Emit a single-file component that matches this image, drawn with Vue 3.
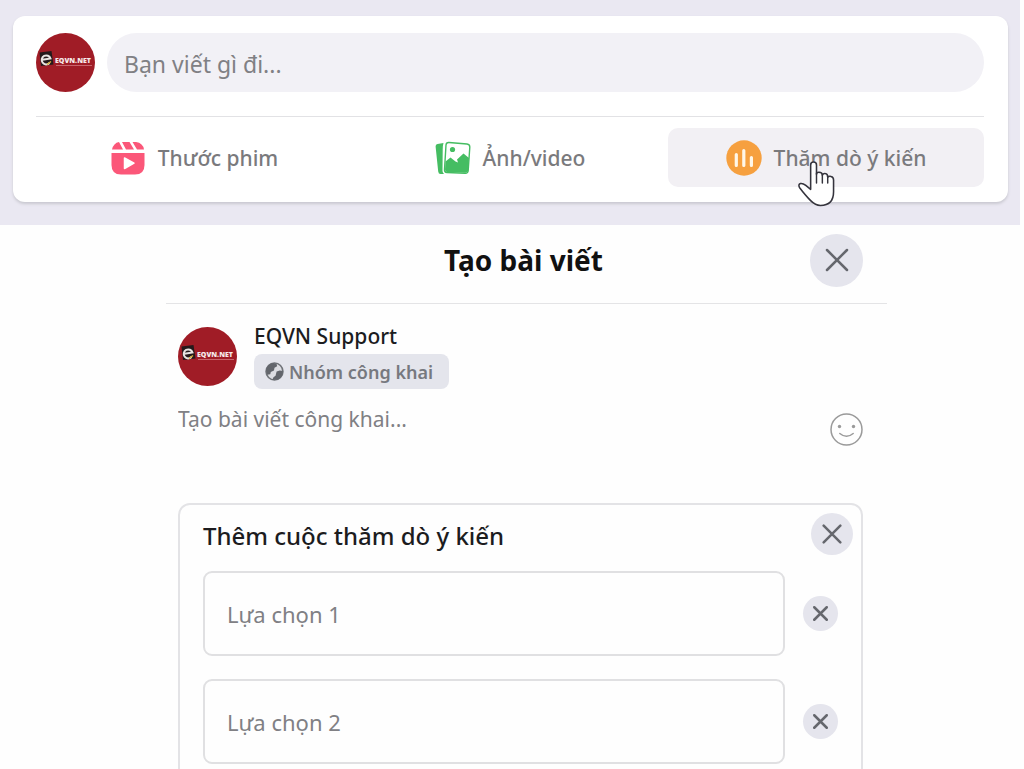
<script setup>
import { ref } from 'vue'

const draft = ref('')
const post = ref('')
const options = ref([
  { id: 1, text: '' },
  { id: 2, text: '' },
])

function removeOption(id) {
  options.value = options.value.filter((o) => o.id !== id)
}
</script>

<template>
  <div class="page">
    <svg class="defs" aria-hidden="true">
      <symbol id="cross" viewBox="0 0 24 24">
        <path d="M2 2 L22 22 M22 2 L2 22" fill="none" stroke="#65676d" stroke-width="2.500" stroke-linecap="round" vector-effect="non-scaling-stroke" />
      </symbol>
    </svg>

    <section class="band">
      <div class="composer">
        <div class="prompt">
          <svg class="avatar" viewBox="0 0 59 59" role="img" aria-label="EQVN">
            <circle cx="29.5" cy="29.5" r="29.5" fill="#a01c26" />
            <path d="M3.500 19.500 L15.500 18 L17.500 31.500 L5 33 Z" fill="#24191b" />
            <path d="M6.500 26.700 L14.500 25.500 A4.500 4.500 0 1 0 13.500 30" fill="none" stroke="#e8e4e2" stroke-width="2" />
            <path d="M11 31.500 L15 28.500" stroke="#d8b23c" stroke-width="1.500" />
            <text x="19" y="30" class="brand-text">EQVN.NET</text>
            <path d="M20 32.500 H56" stroke="#c8646c" stroke-width="1" />
          </svg>
          <input v-model="draft" class="prompt-input" type="text" aria-label="Bạn viết gì đi" placeholder="Bạn viết gì đi..." />
        </div>
        <div class="actions">
          <button type="button" class="action">
            <svg class="action-icon" viewBox="0 0 36 36" aria-hidden="true">
              <path d="M1.500 13 H34.500 V25 Q34.500 34.500 25 34.500 H11 Q1.500 34.500 1.500 25 Z" fill="#fb5779" />
              <path d="M2 9.500 Q3.500 3 9 2 L13 9.500 Z M12 2 H19.500 L24 9.500 H16 Z M22.500 2 H26 Q33 3 34 9.500 H27 Z" fill="#fb5779" />
              <path d="M14.500 18 L24 23.200 L14.500 28.500 Z" fill="#fff" stroke="#fff" stroke-width="1.500" stroke-linejoin="round" />
            </svg>
            <span>Thước phim</span>
          </button>
          <button type="button" class="action">
            <svg class="action-icon" viewBox="0 0 36 36" aria-hidden="true">
              <path d="M2.500 4 L8.500 3 Q7.500 6 7.700 10 L7.500 31 Q7.500 32.500 9 34 L5.500 34 Q3.500 34 3.200 31.500 L.6 6.500 Q.5 4.400 2.500 4 Z" fill="#45bd62" />
              <path d="M14 2.500 L32 4 Q35 4.300 34.800 7.300 L33.200 30.500 Q33 33.500 30 33.300 L12 32.500 Q9.300 32.300 9.500 29.500 L11 5 Q11.200 2.300 14 2.500 Z" fill="#fff" stroke="#45bd62" stroke-width="1.400" />
              <circle cx="17.500" cy="9.500" r="2.600" fill="#45bd62" />
              <path d="M10.500 21.500 L15.500 17.500 L20.500 21.500 L23 22.500 L22 19.500 L28.500 13.500 L34 18 L33 31 Q32.500 33 30 32.800 L12 32 Q10 31.500 10 29.500 Z" fill="#45bd62" />
            </svg>
            <span>Ảnh/video</span>
          </button>
          <button type="button" class="action active">
            <svg class="action-icon" viewBox="0 0 36 36" aria-hidden="true">
              <circle cx="18" cy="18" r="17.700" fill="#f6a03f" />
              <path d="M10.300 14.500 V25.500 M17.800 10.500 V25.500 M25.400 17.500 V25.500" stroke="#fff7e8" stroke-width="3.200" stroke-linecap="round" />
            </svg>
            <span>Thăm dò ý kiến</span>
            <svg class="pointer" viewBox="0 0 40 48" aria-hidden="true">
              <path d="M14 29.500 V4.500 Q14 1.500 17 1.500 Q20 1.500 20 4.500 V14 Q20 12 22.500 12 Q26 12 26 15 Q27 13 29 13.300 Q31.500 13.600 31.500 17 Q33 15.500 35 16.300 Q37.500 17 37.500 20 V32 Q37.500 46 24 46 Q19 46 14 41 Q9 36 2.500 27.500 Q1 24.500 3.500 23.500 Q6 23 9 25.500 Z" fill="#fff" stroke="#35343d" stroke-width="1.600" stroke-linejoin="round" />
              <path d="M20 13 V23 M26 15 V23 M31.500 17 V23" fill="none" stroke="#35343d" stroke-width="1.500" stroke-linecap="round" />
            </svg>
          </button>
        </div>
      </div>
    </section>

    <main class="stage">
      <div class="dialog" role="dialog" aria-labelledby="dialog-title">
        <header class="head">
          <h1 id="dialog-title" class="title">Tạo bài viết</h1>
          <button type="button" class="round large" aria-label="Đóng">
            <svg aria-hidden="true"><use href="#cross" /></svg>
          </button>
        </header>

        <div class="body">
          <div class="author">
            <svg class="avatar" viewBox="0 0 59 59" role="img" aria-label="EQVN">
              <circle cx="29.5" cy="29.5" r="29.5" fill="#a01c26" />
              <path d="M3.500 19.500 L15.500 18 L17.500 31.500 L5 33 Z" fill="#24191b" />
              <path d="M6.500 26.700 L14.500 25.500 A4.500 4.500 0 1 0 13.500 30" fill="none" stroke="#e8e4e2" stroke-width="2" />
              <path d="M11 31.500 L15 28.500" stroke="#d8b23c" stroke-width="1.500" />
              <text x="19" y="30" class="brand-text">EQVN.NET</text>
              <path d="M20 32.500 H56" stroke="#c8646c" stroke-width="1" />
            </svg>
            <div class="who">
              <strong class="name">EQVN Support</strong>
              <button type="button" class="audience">
                <svg class="globe" viewBox="0 0 18 18" aria-hidden="true">
                  <circle cx="9" cy="9" r="8" fill="#dcdde2" stroke="#707378" stroke-width="1.500" />
                  <path d="M1 8 Q2 2 8 1 L11 2 L11.500 4 L9 5.500 L8.500 8 L5.500 9.500 L5 11.500 L2 12 Z M11 9 L14 8 L17 8.500 Q17 14 12.500 16.500 L7 17 L8 14.500 L10 13 Z" fill="#63666c" />
                </svg>
                <span>Nhóm công khai</span>
              </button>
            </div>
          </div>

          <div class="writer">
            <textarea v-model="post" class="post" aria-label="Nội dung bài viết" placeholder="Tạo bài viết công khai..."></textarea>
            <button type="button" class="emoji" aria-label="Biểu tượng cảm xúc">
              <svg viewBox="0 0 33 33" aria-hidden="true">
                <circle cx="16.500" cy="16.500" r="15.500" fill="none" stroke="#9a9a9a" stroke-width="1.500" />
                <circle cx="9.500" cy="13.500" r="1.700" fill="#9a9a9a" />
                <circle cx="23.500" cy="13.500" r="1.700" fill="#9a9a9a" />
                <path d="M9.800 20.500 Q16.500 26 23.200 20.500" fill="none" stroke="#9a9a9a" stroke-width="1.500" stroke-linecap="round" />
              </svg>
            </button>
          </div>

          <section class="poll">
            <div class="poll-head">
              <h2 class="poll-title">Thêm cuộc thăm dò ý kiến</h2>
              <button type="button" class="round medium" aria-label="Gỡ cuộc thăm dò">
                <svg aria-hidden="true"><use href="#cross" /></svg>
              </button>
            </div>
            <div v-for="o in options" :key="o.id" class="option">
              <input v-model="o.text" class="option-input" type="text" :aria-label="`Lựa chọn ${o.id}`" :placeholder="`Lựa chọn ${o.id}`" />
              <button type="button" class="round small" :aria-label="`Xóa lựa chọn ${o.id}`" @click="removeOption(o.id)">
                <svg aria-hidden="true"><use href="#cross" /></svg>
              </button>
            </div>
          </section>
        </div>
      </div>
    </main>
  </div>
</template>

<style>
body {
  margin: 0;
  background: #fff;
}
</style>

<style scoped>
.page {
  height: 100vh;
  overflow: hidden;
  background: #fefefe;
  font-family: "Noto Sans", "Open Sans", sans-serif;
  color: #1c1c1e;
}
.page * {
  box-sizing: border-box;
}
.defs {
  position: absolute;
  width: 0;
  height: 0;
}
button,
input,
textarea {
  font: inherit;
  margin: 0;
  border: 0;
  padding: 0;
  background: none;
  color: inherit;
}
button {
  cursor: pointer;
}
::placeholder {
  color: #808084;
  opacity: 1;
}
.brand-text {
  font: 800 7px "Open Sans", "Noto Sans", sans-serif;
  fill: #f6e9e9;
}
.avatar {
  flex: none;
  width: 59px;
  height: 59px;
}

.band {
  margin-right: 4px;
  padding: 16px 12px 23px 13px;
  background: #eae8f2;
}
.composer {
  padding: 17px 24px 15px 23px;
  border-radius: 12px;
  background: #fff;
  box-shadow: 0 2px 3px #c9c8d0;
}
.prompt {
  display: flex;
  gap: 12px;
  padding-bottom: 24px;
  border-bottom: 1px solid #e2e2e5;
}
.prompt-input {
  flex: 1;
  min-width: 0;
  height: 59px;
  padding: 2px 17px 0;
  border-radius: 30px;
  background: #f2f1f6;
  font-size: 23px;
}
.actions {
  display: grid;
  grid-template-columns: repeat(3, 1fr);
  padding-top: 11px;
}
.action {
  position: relative;
  display: flex;
  align-items: center;
  justify-content: center;
  gap: 12px;
  height: 59px;
  border-radius: 10px;
  font-size: 21px;
  font-weight: 550;
  color: #7a7a7d;
  white-space: nowrap;
}
.active {
  background: #f2f0f4;
}
.action-icon {
  width: 36px;
  height: 36px;
}
.pointer {
  position: absolute;
  top: 32px;
  left: 129px;
  width: 39px;
  height: 48px;
}

.stage {
  padding-left: 29px;
}
.dialog {
  max-width: 721px;
  margin: 0 auto;
}
.head {
  display: grid;
  grid-template-columns: 53px 1fr 53px;
  align-items: center;
  height: 79px;
  padding: 0 24px 8px 18px;
  border-bottom: 1px solid #e4e4e6;
}
.title {
  grid-column: 2;
  margin: 0;
  text-align: center;
  font-size: 28px;
  line-height: 38px;
  font-weight: 700;
  color: #111;
}
.round {
  display: grid;
  place-items: center;
  flex: none;
  border-radius: 50%;
  background: #e5e5ed;
}
.large {
  width: 53px;
  height: 53px;
}
.large svg {
  width: 24px;
  height: 24px;
}
.medium {
  width: 42px;
  height: 42px;
}
.medium svg {
  width: 20px;
  height: 20px;
}
.small {
  width: 35px;
  height: 35px;
}
.small svg {
  width: 15px;
  height: 15px;
}

.body {
  padding: 19px 24px 24px 12px;
}
.author {
  display: flex;
  align-items: center;
  gap: 17px;
}
.who {
  display: flex;
  flex-direction: column;
  align-items: flex-start;
  gap: 5px;
}
.name {
  font-size: 21px;
  line-height: 26px;
  font-weight: 550;
}
.audience {
  display: flex;
  align-items: center;
  gap: 5px;
  height: 35px;
  padding: 0 16px 0 11px;
  border-radius: 8px;
  background: #e4e5ec;
  font-size: 18px;
  font-weight: 600;
  color: #77797f;
}
.globe {
  width: 19px;
  height: 19px;
}
.writer {
  display: flex;
  align-items: flex-start;
  justify-content: space-between;
  padding-top: 14px;
}
.post {
  flex: 1;
  height: 100px;
  resize: none;
  font-size: 21px;
  line-height: 32px;
}
.emoji {
  width: 33px;
  height: 33px;
  margin-top: 10px;
}
.emoji svg {
  display: block;
}
.poll {
  display: flex;
  flex-direction: column;
  gap: 23px;
  padding: 8px 23px 24px;
  border: 2px solid #e3e3e6;
  border-radius: 12px;
}
.poll-head {
  display: flex;
  align-items: flex-start;
  justify-content: space-between;
  margin: 0 -15px -11px 0;
}
.poll-title {
  margin: 0;
  font-size: 24px;
  line-height: 46px;
  font-weight: 550;
}
.option {
  display: flex;
  align-items: center;
  gap: 18px;
}
.option-input {
  flex: 1;
  min-width: 0;
  height: 85px;
  padding: 0 22px;
  border: 2px solid #e0e0e2;
  border-radius: 9px;
  font-size: 22px;
}
</style>
